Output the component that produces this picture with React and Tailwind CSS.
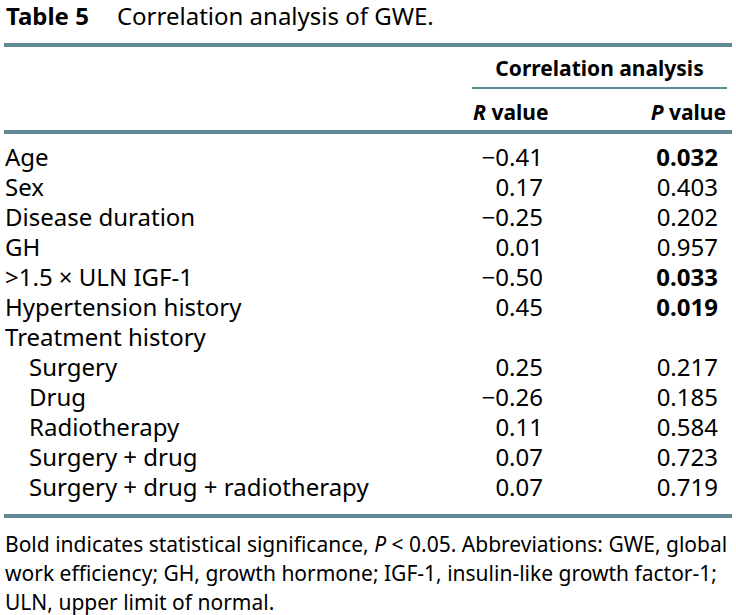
import React from 'react'

const rows = [
  { label: 'Age', r: '−0.41', p: '0.032', sig: true },
  { label: 'Sex', r: '0.17', p: '0.403' },
  { label: 'Disease duration', r: '−0.25', p: '0.202' },
  { label: 'GH', r: '0.01', p: '0.957' },
  { label: '>1.5 × ULN IGF-1', r: '−0.50', p: '0.033', sig: true },
  { label: 'Hypertension history', r: '0.45', p: '0.019', sig: true },
  { label: 'Treatment history' },
  { label: 'Surgery', r: '0.25', p: '0.217', sub: true },
  { label: 'Drug', r: '−0.26', p: '0.185', sub: true },
  { label: 'Radiotherapy', r: '0.11', p: '0.584', sub: true },
  { label: 'Surgery + drug', r: '0.07', p: '0.723', sub: true },
  { label: 'Surgery + drug + radiotherapy', r: '0.07', p: '0.719', sub: true }
]

const Rule = ({ className = '' }) => <div className={`mx-[4px] h-[4px] bg-[#5f8a95] ${className}`} />

export default function App() {
  return (
    <div
      className="w-[736px] h-[615px] overflow-hidden bg-white text-black"
      style={{ fontFamily: '"Noto Sans", "Open Sans", sans-serif' }}
    >
      {/* caption */}
      <div className="h-[43px] pt-[1px] pl-[6px] text-[24px] leading-[30px] whitespace-nowrap">
        <span className="font-bold">Table 5</span>
        <span className="ml-[28px]">Correlation analysis of GWE.</span>
      </div>
      <Rule />

      {/* column headers */}
      <div className="h-[83px] pt-[6px] text-[21px] leading-[30px] font-bold">
        <div className="ml-[472px] w-[255px] text-center">Correlation analysis</div>
        <div className="ml-[472px] w-[255px] mt-[4px] h-[2px] bg-[#5f8a95]" />
        <div className="ml-[473px] w-[253px] mt-[8px] flex justify-between">
          <span><i>R</i> value</span>
          <span><i>P</i> value</span>
        </div>
      </div>
      <Rule />

      {/* body */}
      <div className="h-[380px] pt-[8px] text-[24px] leading-[30px]">
        {rows.map((row) => (
          <div key={row.label} className="grid grid-cols-[1fr_100px_175px] pl-[5px] pr-[18px] whitespace-nowrap">
            <div className={row.sub ? 'pl-[24px]' : ''}>{row.label}</div>
            <div className="text-right">{row.r}</div>
            <div className={`text-right ${row.sig ? 'font-bold' : ''}`}>{row.p}</div>
          </div>
        ))}
      </div>
      <Rule />

      {/* footnote */}
      <div className="pt-[12px] pl-[5px] text-[21px] leading-[29px] whitespace-nowrap">
        Bold indicates statistical significance, <i>P</i> &lt; 0.05. Abbreviations: GWE, global
        <br />
        work efficiency; GH, growth hormone; IGF-1, insulin-like growth factor-1;
        <br />
        ULN, upper limit of normal.
      </div>
    </div>
  )
}
